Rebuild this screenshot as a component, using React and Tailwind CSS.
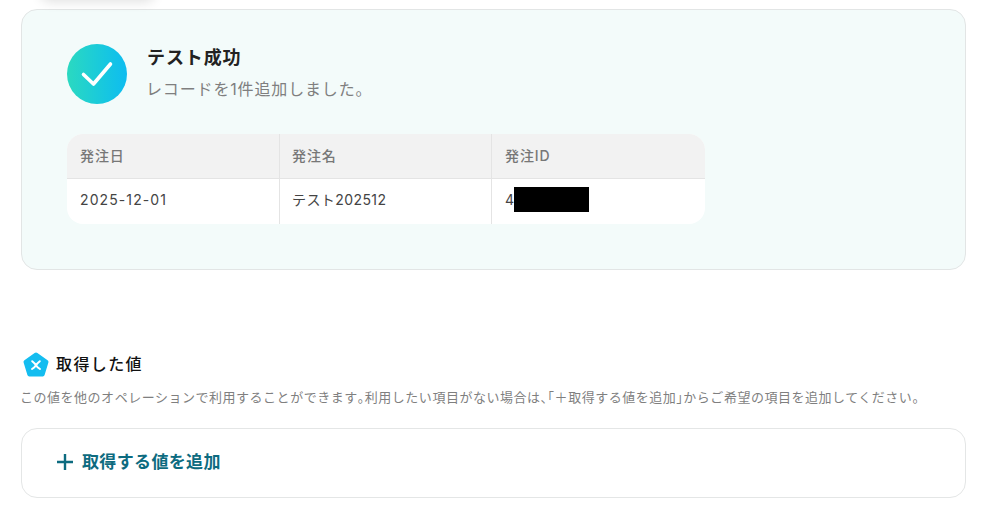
import React from "react";

function Check() {
  return (
    <div className="w-[60px] h-[60px] rounded-full bg-gradient-to-r from-[#2bd9c0] to-[#0fbcf0] flex items-center justify-center shrink-0">
      <svg width="34" height="28" viewBox="0 0 34 28" fill="none">
        <path d="M3.5 14.5 L13.5 24 L30.5 4" stroke="#fff" strokeWidth="3.6" strokeLinecap="round" strokeLinejoin="round" />
      </svg>
    </div>
  );
}

function Pentagon() {
  return (
    <svg width="26" height="26" viewBox="0 0 26 26" className="shrink-0">
      <path d="M11.6 0.9 Q13 0 14.4 0.9 L24.6 8.2 Q25.8 9.1 25.4 10.4 L21.6 23 Q21.2 24.4 19.8 24.4 L6.2 24.4 Q4.8 24.4 4.4 23 L0.6 10.4 Q0.2 9.1 1.4 8.2 Z" fill="#14bdf0" />
      <path d="M9.2 9.2 Q12 11.5 13 13.2 Q14 15 17 17 M16.8 9.2 Q14 11.5 13 13.2 Q12 15 9 17" stroke="#fff" strokeWidth="2" fill="none" strokeLinecap="round" />
    </svg>
  );
}

export default function App() {
  const halt = "[font-feature-settings:'halt']";
  return (
    <div className="relative w-[996px] h-[517px] overflow-hidden bg-white font-['Inter','Noto_Sans_CJK_JP',sans-serif] tracking-[0.04em] pl-[21px] pr-[30px] pt-[9px]">
      <div className="absolute left-[40px] top-[-20px] w-[115px] h-[20px] rounded-full shadow-[0_2px_12px_rgba(0,0,0,0.12)]" />
      <section className="h-[261px] rounded-[16px] border border-[#e2e5e5] bg-[#f3fbfa] pt-[34px] pl-[45px]">
        <div className="flex items-center gap-[20px]">
          <Check />
          <div className="flex flex-col">
            <h2 className="text-[18px] leading-[28px] font-bold text-[#222] mt-[-3px] tracking-[0.9px]">テスト成功</h2>
            <p className="text-[16px] leading-[24px] text-[#7f7f7f] mt-[5px] tracking-[0.85px] -ml-[1px]">レコードを1件追加しました。</p>
          </div>
        </div>
        <div className="mt-[30px] w-[638px] rounded-[16px] overflow-hidden bg-white">
          <div className="grid grid-cols-[213px_212px_213px] h-[45px] bg-[#f2f2f2] border-b border-[#e4e4e4] text-[14px] leading-[44px] font-medium text-[#777] tracking-[0.9px]">
            <div className="pl-[13px] border-r border-[#e4e4e4]">発注日</div>
            <div className="pl-[12px] border-r border-[#e4e4e4]">発注名</div>
            <div className="pl-[13px]">発注ID</div>
          </div>
          <div className="grid grid-cols-[213px_212px_213px] h-[45px] text-[14px] leading-[42px] text-[#444]">
            <div className="pl-[13px] border-r border-[#e4e4e4] tracking-[1.1px]">2025-12-01</div>
            <div className="pl-[12px] border-r border-[#e4e4e4] tracking-[0.42px]">テスト202512</div>
            <div className="pl-[13px] flex items-start tracking-normal">
              4<span className="inline-block w-[75px] h-[25px] mt-[8px] bg-black" />
            </div>
          </div>
        </div>
      </section>

      <div className="mt-[82px] flex items-center gap-[7px] pl-[2px] h-[26px]">
        <Pentagon />
        <h3 className="text-[16px] leading-[24px] font-medium text-[#111] mt-[-2px] tracking-[1.4px]">取得した値</h3>
      </div>
      <p className="mt-[9px] -ml-[1px] text-[13px] leading-[20px] text-[#7f7f7f] whitespace-nowrap tracking-[0.52px]">
        この値を他のオペレーションで利用することができます<span className={halt}>。</span>利用したい項目がない場合は<span className={halt}>、</span><span className={halt}>「</span>＋取得する値を追加<span className={halt}>」</span>からご希望の項目を追加してください。
      </p>
      <div className="mt-[21px] h-[70px] rounded-[16px] border border-[#e4e6e6] flex items-center pl-[33px] gap-[7px] text-[#0d6b80]">
        <svg width="20" height="20" viewBox="0 0 20 20" className="shrink-0 mt-[-3px]">
          <path d="M10 2 V18 M2 10 H18" stroke="#0d6b80" strokeWidth="2.4" />
        </svg>
        <span className="text-[17px] font-bold tracking-[0.35px]">取得する値を追加</span>
      </div>
    </div>
  );
}
